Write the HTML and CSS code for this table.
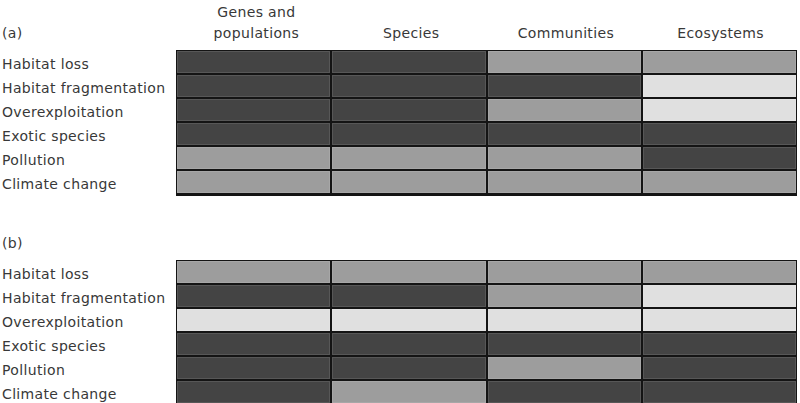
FILE: index.html
```html
<!DOCTYPE html>
<html>
<head>
<meta charset="utf-8">
<link rel="stylesheet" href="styles.css">
</head>
<body>
<section class="panel panel-a">
  <div class="head">
    <span class="tag">(a)</span>
    <div class="cols">
      <span>Genes and<br>populations</span>
      <span>Species</span>
      <span>Communities</span>
      <span>Ecosystems</span>
    </div>
  </div>
  <div class="body">
    <ul class="labels">
      <li>Habitat loss</li>
      <li>Habitat fragmentation</li>
      <li>Overexploitation</li>
      <li>Exotic species</li>
      <li>Pollution</li>
      <li>Climate change</li>
    </ul>
    <div class="matrix">
      <i class="d"></i><i class="d"></i><i class="m"></i><i class="m"></i>
      <i class="d"></i><i class="d"></i><i class="d"></i><i class="l"></i>
      <i class="d"></i><i class="d"></i><i class="m"></i><i class="l"></i>
      <i class="d"></i><i class="d"></i><i class="d"></i><i class="d"></i>
      <i class="m"></i><i class="m"></i><i class="m"></i><i class="d"></i>
      <i class="m"></i><i class="m"></i><i class="m"></i><i class="m"></i>
    </div>
  </div>
</section>
<section class="panel panel-b">
  <div class="head">
    <span class="tag">(b)</span>
  </div>
  <div class="body">
    <ul class="labels">
      <li>Habitat loss</li>
      <li>Habitat fragmentation</li>
      <li>Overexploitation</li>
      <li>Exotic species</li>
      <li>Pollution</li>
      <li>Climate change</li>
    </ul>
    <div class="matrix">
      <i class="m"></i><i class="m"></i><i class="m"></i><i class="m"></i>
      <i class="d"></i><i class="d"></i><i class="m"></i><i class="l"></i>
      <i class="l"></i><i class="l"></i><i class="l"></i><i class="l"></i>
      <i class="d"></i><i class="d"></i><i class="d"></i><i class="d"></i>
      <i class="d"></i><i class="d"></i><i class="m"></i><i class="d"></i>
      <i class="d"></i><i class="m"></i><i class="d"></i><i class="d"></i>
    </div>
  </div>
</section>
</body>
</html>
```
FILE: styles.css
```css
html, body {
  margin: 0;
  padding: 0;
  background: #fff;
}
body {
  width: 800px;
  height: 403px;
  overflow: hidden;
  font-family: "DejaVu Sans", sans-serif;
  font-size: 14px;
  letter-spacing: 0.35px;
  color: #383838;
}
.head {
  display: flex;
  align-items: flex-end;
  padding-bottom: 6px;
  box-sizing: border-box;
}
.panel-a .head { height: 50px; }
.panel-b .head { height: 64px; }
.tag {
  width: 176px;
  padding-left: 2px;
  line-height: 21px;
}
.cols {
  display: grid;
  grid-template-columns: repeat(4, 1fr);
  align-items: end;
  width: 621px;
  padding: 0 1px;
  box-sizing: border-box;
  text-align: center;
  line-height: 21px;
}
.body {
  display: flex;
}
.labels {
  list-style: none;
  margin: 0;
  padding: 2px 0 0 2px;
  width: 174px;
}
.labels li {
  height: 24px;
  line-height: 24px;
  white-space: nowrap;
}
.matrix {
  display: grid;
  grid-template-columns: repeat(4, 1fr);
  grid-auto-rows: 22px;
  gap: 2px;
  padding: 1px;
  width: 621px;
  box-sizing: border-box;
  background: #141414;
}
.matrix i {
  display: block;
  box-shadow: inset 0 0 0 1px rgba(255,255,255,0.1);
}
.matrix .d { background: #444; }
.matrix .m { background: #9d9d9d; }
.matrix .l { background: #e0e0e0; }
```
